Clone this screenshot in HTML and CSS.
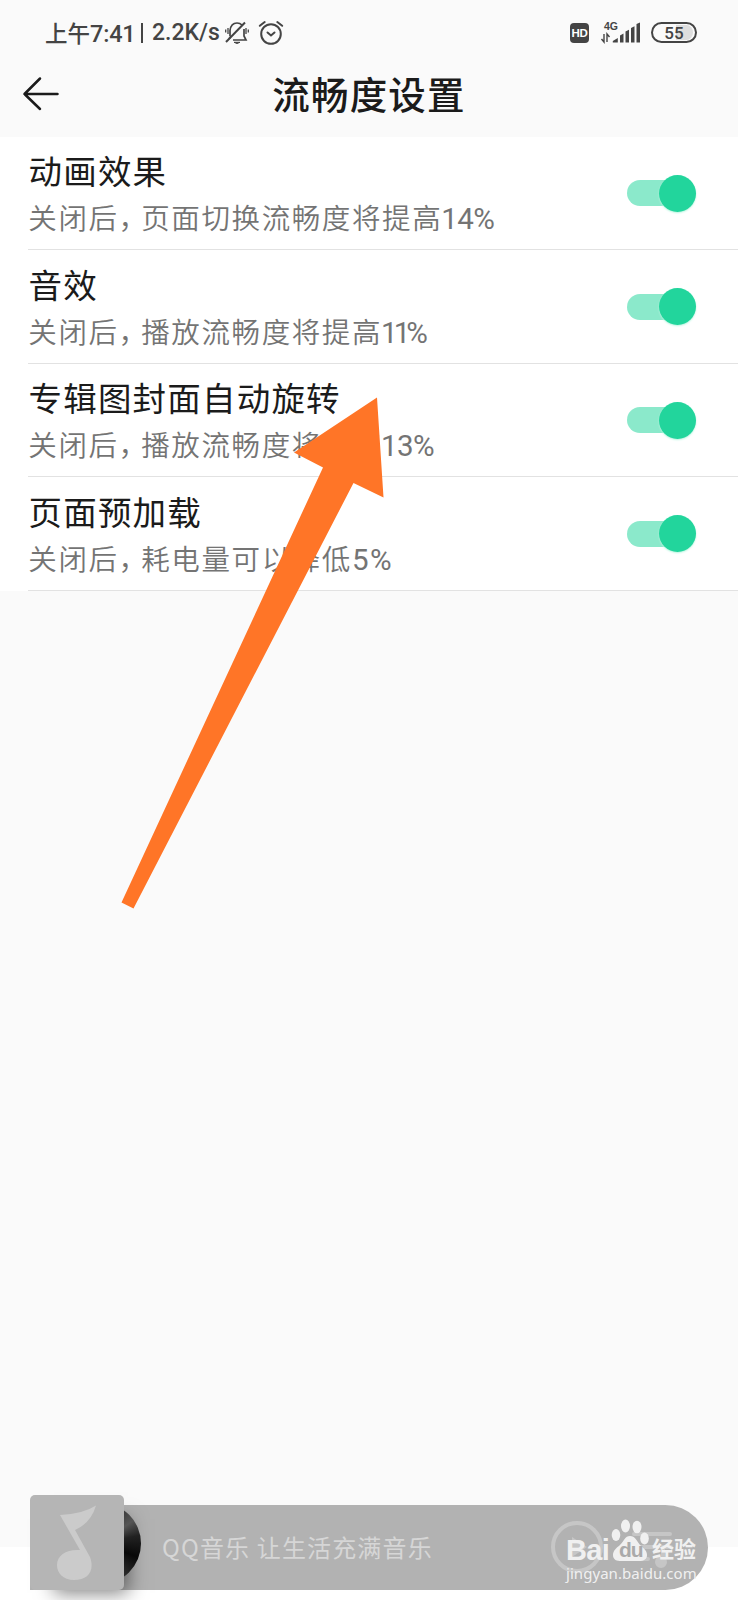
FILE: index.html
```html
<!DOCTYPE html>
<html lang="zh-CN">
<head>
<meta charset="utf-8">
<title>流畅度设置</title>
<link rel="stylesheet" href="styles.css">
</head>
<body>
<div class="screen">
  <div class="status">
    <span class="time">上午<span class="clock">7:41</span></span>
    <i class="bar"></i>
    <span class="speed">2.2K/s</span>
    <svg class="bell" width="24" height="24" viewBox="0 0 24 24" fill="none" stroke="#444" stroke-width="1.7">
      <path d="M5 15V9.500Q6 2 12 2q3 0 5 2M19 8v7l2 4H8M4 18l2-3"/>
      <path d="M1 21 20 1.500" stroke-width="2"/>
      <path d="M9 21.300h6l-3 1.200z" fill="#444" stroke-width="1"/>
      <path d="M3 7v6M.7 8.500v3M21 7v6M23.300 8.500v3" stroke-width="1.300"/>
    </svg>
    <svg class="alarm" width="26" height="26" viewBox="0 0 26 26" fill="none" stroke="#444" stroke-width="2" stroke-linecap="round">
      <circle cx="13" cy="14" r="9.800"/><path d="m9.500 12.500 3.500 3 3.500-3M1.800 5.800 6.700 2M19.300 2l4.900 3.800"/>
    </svg>
    <span class="hd">HD</span>
    <svg class="signal" width="40" height="24" viewBox="0 0 40 24" fill="#444">
      <text x="3" y="8.700" class="net">4G</text>
      <path d="M11.800 21.500v-1.500l5-3v4.500zM19 21.500v-7l3.500-2v9zM24.500 21.500V10.500l3.500-1.800v12.800zM30 21.500V7l3.500-1.800v16.300zM35.500 21.500V3L39 1.500v20z"/>
      <path d="M3 13v8L.5 18M6 21v-8l2.500 3" fill="none" stroke="#444" stroke-width="1.400"/>
    </svg>
    <span class="battery">55</span>
  </div>

  <header class="header">
    <svg class="back" width="38" height="36" viewBox="0 0 38 36" fill="none" stroke="#1b1b1b" stroke-width="2.500" stroke-linecap="round" stroke-linejoin="round">
      <path d="M18 2.500 2.500 18l15.500 15M2.500 18h33"/>
    </svg>
    <h1 class="title">流畅度设置</h1>
  </header>

  <main class="list">
    <section class="row">
      <div class="text"><h2 class="name">动画效果</h2><p class="desc">关闭后<span class="comma">，</span>页面切换流畅度将提高<span class="num">14%</span></p></div>
      <span class="switch"></span>
    </section>
    <section class="row">
      <div class="text"><h2 class="name">音效</h2><p class="desc">关闭后<span class="comma">，</span>播放流畅度将提高<span class="num tight">11%</span></p></div>
      <span class="switch"></span>
    </section>
    <section class="row">
      <div class="text"><h2 class="name">专辑图封面自动旋转</h2><p class="desc">关闭后<span class="comma">，</span>播放流畅度将提高<span class="num">13%</span></p></div>
      <span class="switch"></span>
    </section>
    <section class="row">
      <div class="text"><h2 class="name">页面预加载</h2><p class="desc">关闭后<span class="comma">，</span>耗电量可以降低<span class="num wide">5%</span></p></div>
      <span class="switch"></span>
    </section>
  </main>

  <svg class="pointer" width="264" height="514" viewBox="0 0 264 514">
    <path d="M256 0.500 173 55.500 202 70.500 0.500 505.500 12.500 511.500 232.500 86 262.500 100.500z" fill="#ff7527"/>
  </svg>

  <footer class="player">
    <div class="cover">
      <svg class="note" width="94" height="95" viewBox="0 0 94 95" fill="#cbcbcb">
        <path d="M30 20Q53 19 66 10.500 61 28 45 35L60 62C65 76 58 85 44 85 33 85 27 78 27 70 27 60 37 54 50 55z"/>
      </svg>
    </div>
    <span class="disc"></span>
    <span class="slogan">QQ音乐 让生活充满音乐</span>
    <svg class="controls" width="124" height="56" viewBox="0 0 124 56" fill="none" stroke="#c6c6c6" stroke-width="4">
      <circle cx="27" cy="27" r="24"/><path d="M22 17v20l15-10z" fill="#c6c6c6" stroke="none"/>
      <path d="M84 14h36M84 27h20M84 39h14M113 43V27h8" stroke-linecap="round"/><circle cx="111" cy="42" r="4" fill="#c6c6c6"/>
    </svg>
  </footer>

  <div class="watermark">
    <div class="brand">
      <span class="bai">Bai</span>
      <svg class="paw" width="38" height="43" viewBox="0 0 38 43" fill="#f0f0f0">
        <ellipse cx="5" cy="16" rx="4.300" ry="6"/><ellipse cx="14.500" cy="7" rx="4.500" ry="6.500"/><ellipse cx="26" cy="8" rx="4.500" ry="6.300"/><ellipse cx="33.500" cy="19.500" rx="4.300" ry="6"/>
        <path d="M19 17c-5 0-6 5-10 9-4 3-7 6-7 10 0 5 4 6 8 6h18c5 0 8-2 8-6 0-5-4-7-7-10-3-4-5-9-10-9z"/>
        <text x="8" y="38" class="du">du</text>
      </svg>
      <span class="jingyan">经验</span>
    </div>
    <div class="site">jingyan.baidu.com</div>
  </div>
</div>
</body>
</html>
```

FILE: styles.css
```css
* { box-sizing: border-box; }
body { margin: 0; font-family: "Noto Sans CJK SC", sans-serif; }
.screen {
  position: relative;
  width: 738px;
  height: 1600px;
  overflow: hidden;
  display: flex;
  flex-direction: column;
  background: linear-gradient(#fafafa 1547px, #fff 1547px);
}
.status {
  height: 60px;
  padding: 5px 41px 0 45px;
  display: flex;
  align-items: center;
  color: #444;
  font-size: 22.5px;
  font-weight: 500;
  white-space: nowrap;
}
.time { width: 91px; line-height: 30px; }
.clock { font-family: Roboto, sans-serif; font-weight: 500; font-size: 23.500px; letter-spacing: -.2px; }
.bar { width: 2px; height: 20px; margin: 0 8px 0 5px; background: #444; }
.speed { width: 69px; font: 500 23px/30px Roboto, sans-serif; letter-spacing: 0; margin-left: 1px; padding-top: 1px; }
.bell { margin-left: 4px; }
.alarm { margin: 0 0 0 9px; }
.hd {
  width: 19px; height: 20px; margin-left: auto; border-radius: 4px;
  background: #444; color: #fff;
  font: 700 11.500px/20px "Liberation Sans", sans-serif; text-align: center; letter-spacing: -.2px;
}
.signal { margin-left: 12px; overflow: visible; }
.net { font: 700 10.500px "Liberation Sans", sans-serif; }
.battery {
  width: 46px; height: 21px; margin-left: 10px; border: 2px solid #444; border-radius: 11px;
  background: linear-gradient(90deg, #fafafa 54%, #dedede 54%) content-box;
  padding: 1px 2px;
  font: 500 17px/16px Roboto, sans-serif; text-align: center;
}
.header { position: relative; height: 76.500px; display: flex; justify-content: center; }
.back { position: absolute; left: 22px; top: 16px; }
.title { margin: 6px 0 0 0; font-size: 37.500px; line-height: 54px; font-weight: 500; letter-spacing: 1.200px; color: #1b1b1b; }
.list { background: #fff; }
.row {
  height: 113.500px;
  padding: 0 42px 0 28px;
  display: flex;
  justify-content: space-between;
  background: linear-gradient(#e2e2e2, #e2e2e2) 28px 100% / 710px 1px no-repeat;
}
.text { padding-top: 10.500px; white-space: nowrap; }
.name { margin: 0 0 0 .5px; font-size: 33.500px; line-height: 46px; font-weight: 400; letter-spacing: 1.200px; color: #1b1b1b; }
.desc { margin: 0 0 0 .3px; font-size: 28.500px; line-height: 48px; font-weight: 350; letter-spacing: 1.600px; color: #747474; }
.comma { font-feature-settings: "halt"; letter-spacing: 8.400px; }
.num { font: 400 29.500px/30px Roboto, sans-serif; letter-spacing: -.6px; margin-left: -1px; }
.tight { letter-spacing: -4px; }
.wide { letter-spacing: 1.500px; margin-left: 0; }
.switch {
  position: relative; width: 69px; height: 26px; margin-top: 43.500px;
  border-radius: 13px; background: linear-gradient(90deg, #8be9cb 50px, transparent 50px);
}
.switch::after {
  content: ""; position: absolute; right: 0; top: -5.500px; width: 37px; height: 37px;
  border-radius: 50%; background: #22d59c; box-shadow: 0 1px 2px #b8f5e0;
}
.pointer { position: absolute; left: 121px; top: 397px; }
.player {
  position: relative; margin: auto 30px 10px 30px; height: 85px;
  display: flex; align-items: center;
  border-radius: 0 43px 43px 0; background: #b2b2b2;
}
.cover {
  position: relative; z-index: 2; isolation: isolate; width: 94px; height: 95px; margin-top: -10px; flex: none;
  border-radius: 5px;
}
.cover::before {
  content: ""; position: absolute; z-index: -2; left: 24px; top: 24px; width: 66px; height: 66px;
  box-shadow: 4px 4px 18px 4px rgba(0, 0, 0, .5);
}
.cover::after { content: ""; position: absolute; z-index: -1; inset: 0; border-radius: 5px; background: #b5b5b5; }
.note { display: block; position: relative; }
.disc {
  position: absolute; z-index: 3; left: 30px; top: -2px; width: 81px; height: 81px; border-radius: 50%;
  clip-path: inset(0 0 0 64px);
  background: conic-gradient(#111, #555 55deg, #222 78deg, #080808 110deg, #333 150deg, #080808);
}
.slogan { margin: -2px 0 0 38px; font-size: 24px; line-height: 36px; letter-spacing: 1.150px; color: #d6d6d6; white-space: nowrap; }
.controls { margin-left: auto; margin-right: 34px; }
.watermark { position: absolute; left: 566px; top: 1519px; width: 135px; color: #f0f0f0; }
.brand { display: flex; height: 43px; align-items: flex-end; }
.bai { width: 45px; font: 700 29px/24px "Liberation Sans", sans-serif; letter-spacing: -.7px; }
.paw { flex: none; }
.du { font: 700 21px "Liberation Sans", sans-serif; fill: #aaa; letter-spacing: -1px; }
.jingyan { font-size: 22px; font-weight: 700; line-height: 29px; margin-left: 3px; white-space: nowrap; }
.site { font: 400 15px/20px "Noto Sans", sans-serif; margin-top: 1px; letter-spacing: .05px; }
```
